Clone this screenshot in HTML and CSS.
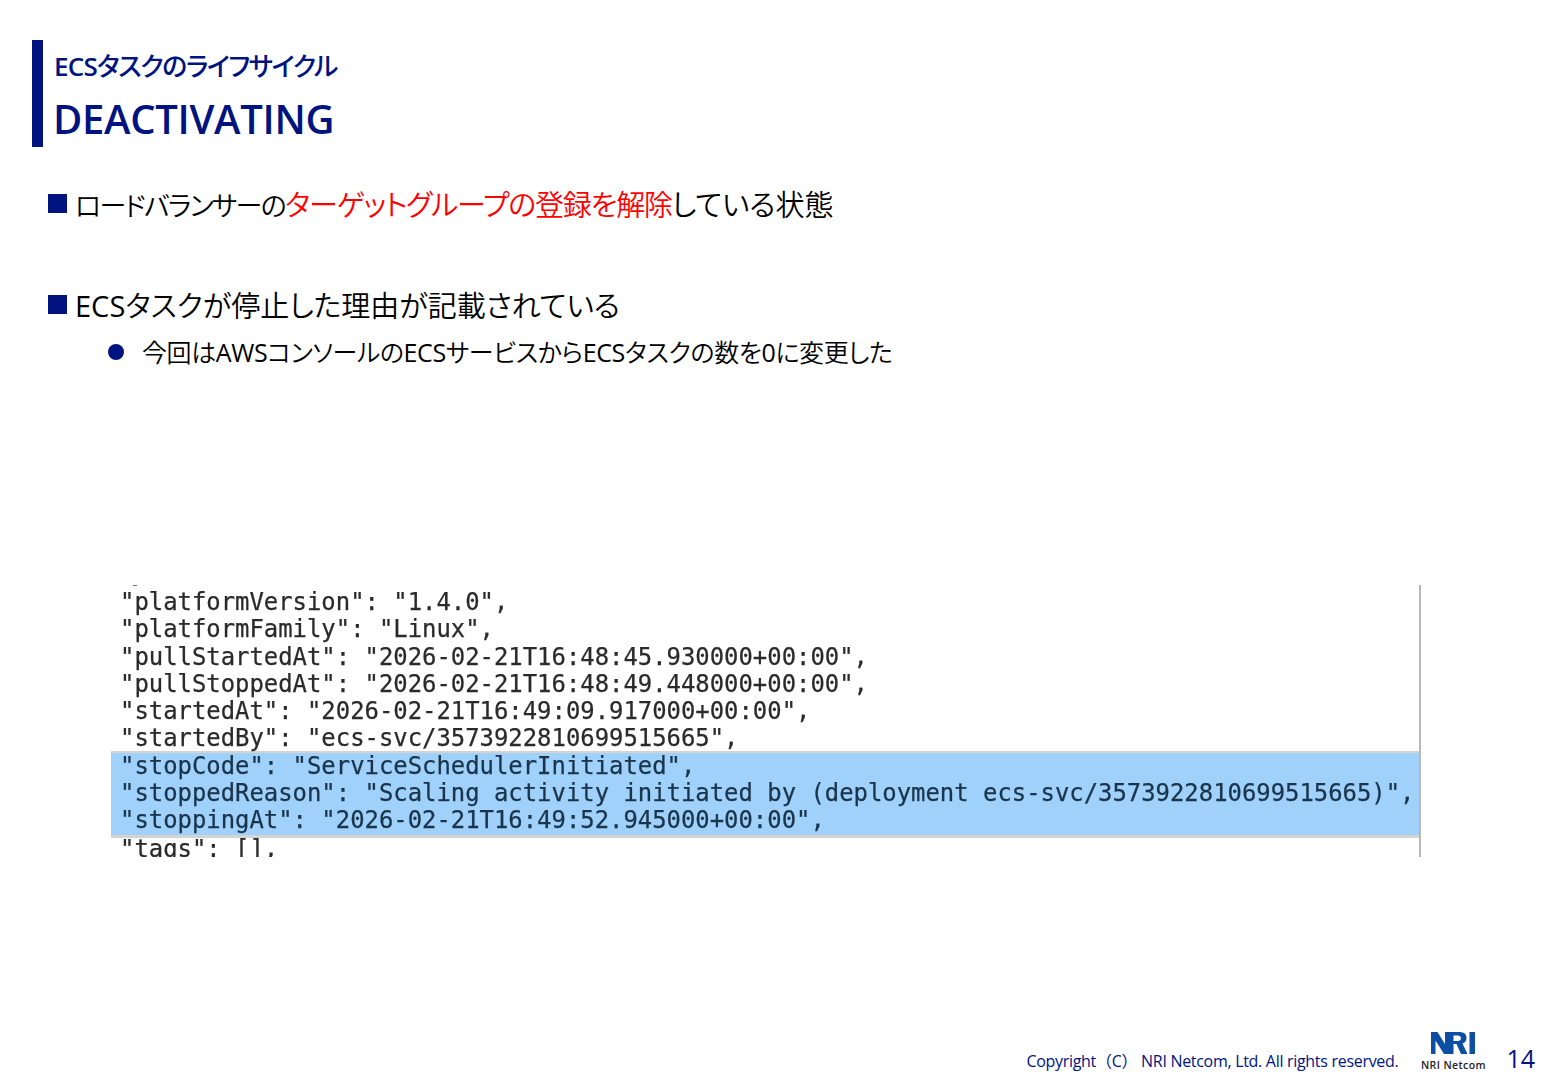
FILE: index.html
```html
<!DOCTYPE html>
<html lang="ja">
<head>
<meta charset="utf-8">
<title>DEACTIVATING</title>
<link rel="stylesheet" href="styles.css">
</head>
<body>
<div class="slide">
  <header class="head">
    <div class="sup"><span class="lat">ECS</span>タスクのライフサイクル</div>
    <h1 class="title">DEACTIVATING</h1>
  </header>
  <section class="bullets">
    <p class="item first"><span class="sq"></span><span><span class="tight">ロードバランサーの</span><em class="red">ターゲットグループの登録を解除</em>している状態</span></p>
    <p class="item second"><span class="sq"></span><span><span class="reg">ECS</span>タスクが停止した理由が記載されている</span></p>
    <p class="sub"><span class="dot"></span><span>今回は<span class="reg">AWS</span>コンソールの<span class="reg">ECS</span>サービスから<span class="reg">ECS</span>タスクの数を<span class="reg">0</span>に変更した</span></p>
  </section>
  <figure class="term">
    <div class="tick"></div>
    <div class="ln">"platformVersion": "1.4.0",</div>
    <div class="ln">"platformFamily": "Linux",</div>
    <div class="ln">"pullStartedAt": "2026-02-21T16:48:45.930000+00:00",</div>
    <div class="ln">"pullStoppedAt": "2026-02-21T16:48:49.448000+00:00",</div>
    <div class="ln">"startedAt": "2026-02-21T16:49:09.917000+00:00",</div>
    <div class="ln">"startedBy": "ecs-svc/3573922810699515665",</div>
    <div class="hl">
      <div class="ln">"stopCode": "ServiceSchedulerInitiated",</div>
      <div class="ln">"stoppedReason": "Scaling activity initiated by (deployment ecs-svc/3573922810699515665)",</div>
      <div class="ln">"stoppingAt": "2026-02-21T16:49:52.945000+00:00",</div>
    </div>
    <div class="ln clip">"tags": [],</div>
  </figure>
  <footer class="foot">
    <span class="copy">Copyright（C） NRI Netcom, Ltd. All rights reserved.</span>
    <div class="logo">
      <svg class="mark" width="44" height="22" viewBox="0 0 44 22" aria-hidden="true">
        <path d="M0 0h6.500l7.500 12V0h4v8.500V0h10c5 0 7.500 2 7.500 6 0 2.800-1.500 4.700-4 5.500L36.500 22H30l-4.500-10h-3v10H18h-5L4.500 8.500V22H0zM22.500 3.500v5.500h4.200c2 0 3.200-1 3.200-2.800 0-1.800-1.200-2.700-3.200-2.700zM38.500 0H44v22h-5.500z"/>
      </svg>
      <span class="brand">NRI Netcom</span>
    </div>
    <span class="page">14</span>
  </footer>
</div>
</body>
</html>
```
FILE: styles.css
```css
* { box-sizing: border-box; }
html, body { margin: 0; padding: 0; background: #fff; }
.slide {
  width: 1560px;
  height: 1080px;
  padding-top: 40px;
  display: flex;
  flex-direction: column;
  font-family: "Open Sans", "Noto Sans CJK JP", sans-serif;
  font-feature-settings: "palt";
  color: #000;
  overflow: hidden;
}
.head {
  margin-left: 32px;
  height: 107px;
  border-left: 11px solid #00137f;
  padding-left: 11px;
  color: #00137f;
}
.sup { font-size: 26px; line-height: 36px; margin-top: 8px; font-weight: 500; letter-spacing: -1.4px; }
.lat { font-weight: 600; letter-spacing: -0.8px; }
.reg { font-weight: 400; }
.title { margin: 10px 0 0 -1px; font-size: 40px; line-height: 50px; font-weight: 600; letter-spacing: -0.3px; }
.bullets { margin-left: 48px; }
.item {
  margin: 0;
  display: flex;
  align-items: center;
  gap: 8px;
  font-size: 29px;
  line-height: 44px;
  font-weight: 350;
  letter-spacing: 0;
}
.tight { font-size: 27px; letter-spacing: -1.700px; }
.first { margin-top: 36px; }
.second { margin-top: 56px; }
.sq { width: 19px; height: 19px; background: #00137f; flex: none; margin-top: -4px; }
.red { color: #f00; font-style: normal; letter-spacing: -1.200px; }
.sub {
  margin: 7px 0 0 60px;
  display: flex;
  align-items: center;
  gap: 18px;
  font-size: 25px;
  line-height: 34px;
  font-weight: 350;
  letter-spacing: -0.4px;
}
.dot { width: 16px; height: 16px; border-radius: 50%; background: #00137f; flex: none; }
.term {
  margin: 216px 0 0 111px;
  width: 1310px;
  height: 272px;
  border-right: 2px solid #b8b8b8;
  font-family: "DejaVu Sans Mono", monospace;
  font-feature-settings: normal;
  font-size: 23.9px;
  line-height: 27.3px;
  color: #2a2a2a;
  -webkit-text-stroke: 0.25px currentColor;
  overflow: hidden;
  filter: blur(0.5px);
}
.tick { height: 4px; position: relative; }
.tick::before { content: ""; position: absolute; left: 22px; top: 0; width: 4px; height: 1px; background: #777; }
.ln { padding-left: 9px; height: 27.3px; white-space: pre; }
.hl {
  background: #9fd1fb;
  border-top: 2px solid #d4d4d4;
  border-bottom: 3px solid #d4d4d4;
  margin-top: -2px;
  color: #1a344b;
}
.clip { margin-top: -2px; }
.foot {
  margin-top: auto;
  height: 54px;
  display: flex;
  align-items: flex-end;
  justify-content: flex-end;
  color: #00137f;
  position: relative;
}
.copy { font-size: 16px; line-height: 22px; margin-bottom: 8px; margin-right: 22px; font-weight: 400; letter-spacing: -0.3px; font-feature-settings: normal; }
.logo { width: 66px; display: flex; flex-direction: column; align-items: center; margin-right: 20px; margin-bottom: 9px; }
.mark { fill: #0b4ea2; display: block; }
.brand { font-size: 10.500px; line-height: 12px; color: #222; font-weight: 600; letter-spacing: 0.4px; margin-top: 5px; white-space: nowrap; }
.page { font-size: 25px; line-height: 32px; margin-bottom: 6px; margin-right: 25px; font-weight: 400; }
```
